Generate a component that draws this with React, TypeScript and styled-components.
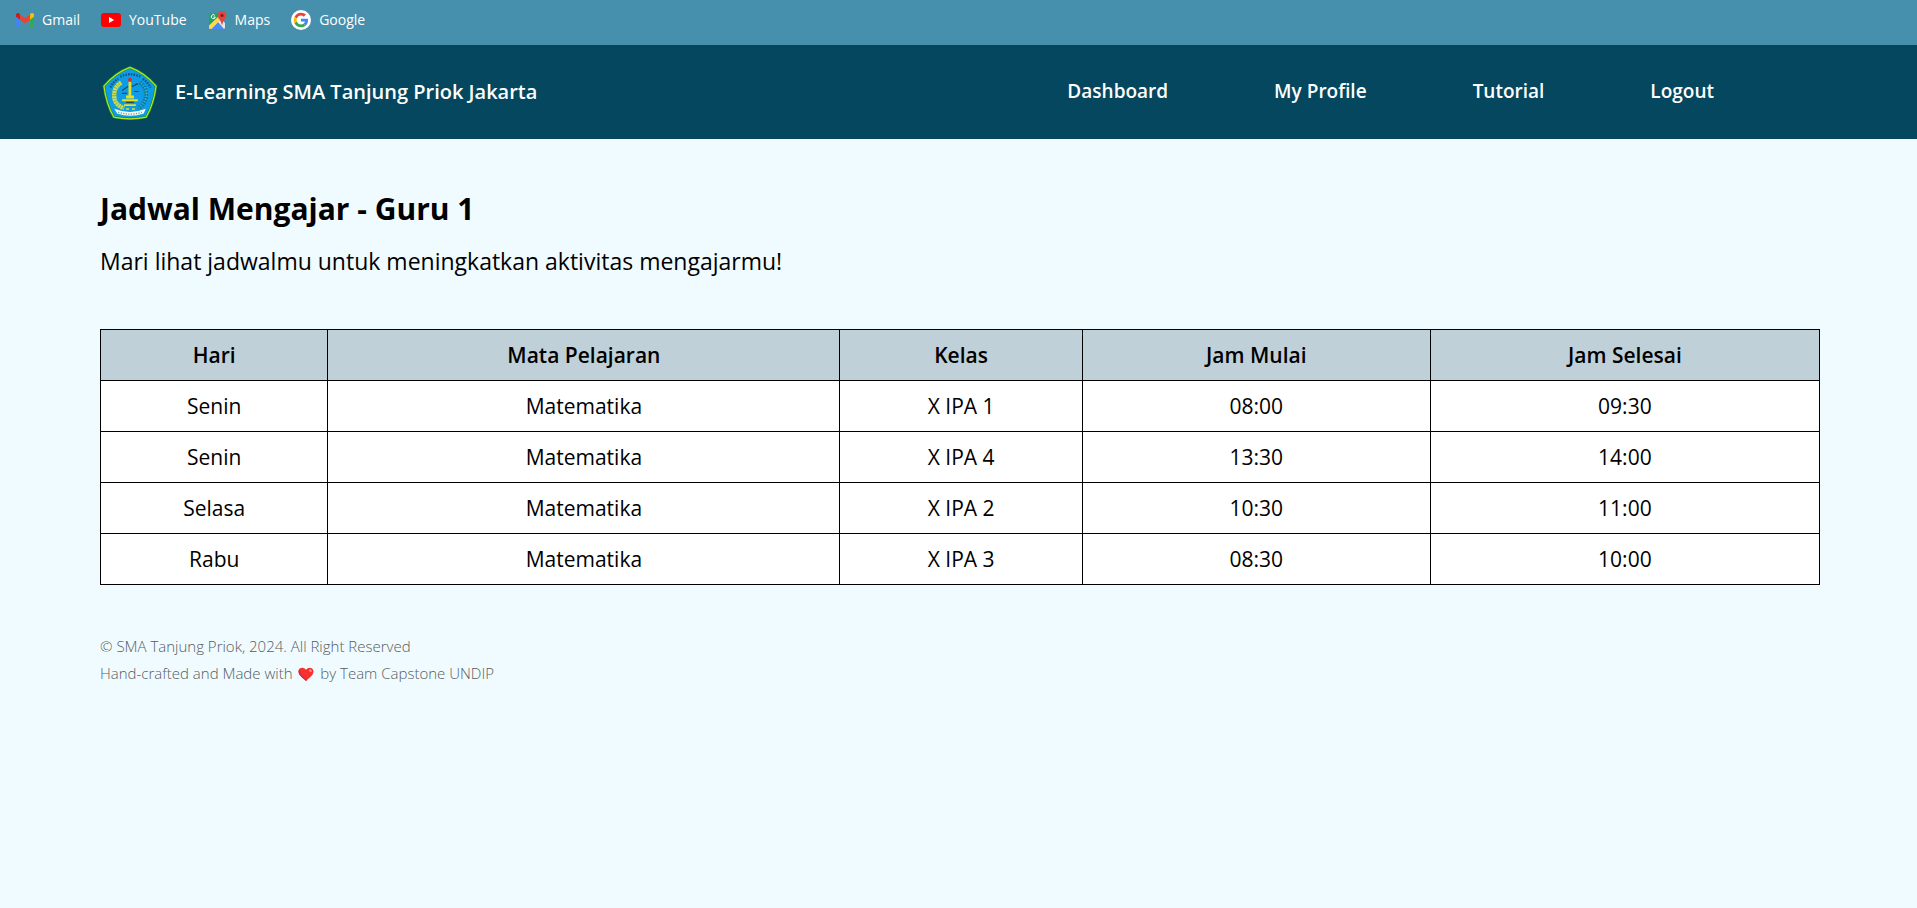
import React from "react";
import styled, { createGlobalStyle } from "styled-components";

const GlobalStyle = createGlobalStyle`
  *, *::before, *::after { box-sizing: border-box; }
  body {
    margin: 0;
    min-height: 100vh;
    background: #f0fbff;
    color: #000;
    font-family: "Open Sans", sans-serif;
  }
`;

const BookmarksBar = styled.nav`
  display: flex;
  align-items: flex-start;
  gap: 21px;
  height: 45px;
  padding: 8px 16px;
  background: #4690ad;
`;

const Bookmark = styled.a`
  display: flex;
  align-items: center;
  gap: 8px;
  height: 24px;
  color: #fff;
  font-size: 14px;
  line-height: 24px;
  text-decoration: none;
  white-space: nowrap;
`;

const Header = styled.header`
  display: flex;
  align-items: center;
  justify-content: space-between;
  height: 94px;
  padding: 0 203px 2px 100px;
  background: #04475e;
`;

const Brand = styled.a`
  display: flex;
  align-items: center;
  gap: 15px;
  color: #fff;
  font-size: 20px;
  font-weight: 550;
  text-decoration: none;
  white-space: nowrap;
`;

const Menu = styled.nav`
  display: flex;
  gap: 106px;
`;

const MenuLink = styled.a`
  color: #fff;
  font-size: 19px;
  line-height: 28px;
  font-weight: 600;
  text-decoration: none;
  white-space: nowrap;
`;

const Main = styled.main`
  padding: 48px 97px 0 100px;
`;

const Title = styled.h1`
  margin: 0;
  font-size: 30px;
  line-height: 44px;
  font-weight: 700;
`;

const Subtitle = styled.p`
  margin: 12px 0 50px;
  font-size: 23px;
  line-height: 36px;
`;

const Schedule = styled.table`
  width: 100%;
  border-collapse: collapse;
  background: #fff;
  font-size: 21px;
  line-height: 30px;
  text-align: center;
`;

const HeadCell = styled.th`
  padding: 10px 5px;
  border: 1px solid #000;
  background: #c0d0d8;
  font-weight: 600;
`;

const Cell = styled.td`
  padding: 10px 5px;
  border: 1px solid #000;
`;

const Footer = styled.footer`
  padding: 48px 100px;
  color: #555b5e;
  font-size: 15px;
  line-height: 27px;
  font-weight: 300;
`;

const FooterLine = styled.p`
  margin: 0;
`;

const HeartSvg = styled.svg`
  margin: 0 1px;
  vertical-align: -3px;
`;

const GmailIcon = () => (
  <svg width="18" height="14" viewBox="0 0 18 14" aria-hidden="true">
    <path d="M0 3v9.500Q0 14 1.400 14H4V5.500z" fill="#4285f4" />
    <path d="M18 3v9.500Q18 14 16.600 14H14V5.500z" fill="#34a853" />
    <path d="M14 1.500V6.700l4-3V2c0-2-2-2.600-3.400-1.500z" fill="#fbbc04" />
    <path d="M4 6.700V1.500l5 3.800 5-3.800v5.200l-5 3.900z" fill="#ea4335" />
    <path d="M0 2v1.700l4 3V1.500L3.400.5C2-.6 0 0 0 2z" fill="#c5221f" />
  </svg>
);

const YouTubeIcon = () => (
  <svg width="20" height="14" viewBox="0 0 20 14" aria-hidden="true">
    <rect width="20" height="14" rx="3" fill="#f00" />
    <path d="M8 4l5.200 3L8 10z" fill="#fff" />
  </svg>
);

const MapsIcon = () => (
  <svg width="19" height="19" viewBox="0 0 19 19" aria-hidden="true">
    <path d="M2 2h11v3L1 16V3q0-1 1-1z" fill="#1fa463" />
    <path d="M1 14.500L12 4l2.500 3L4 18H2q-1 0-1-1z" fill="#ffd84d" />
    <path d="M3.500 18L10 11.500l6.500 6.500z" fill="#4a89f3" />
    <path d="M10 11l3-3 4 4v5l-1 1z" fill="#e3e6e8" />
    <path d="M6.800 4.300a2 2 0 1 0 .5 1.700H5.600" fill="none" stroke="#fff" strokeWidth="1" />
    <path d="M14 0c2.700 0 4.500 2 4.500 4.300 0 3.200-3.600 4.700-4.100 9.200h-.8c-.5-4.500-4.100-6-4.100-9.200C9.500 2 11.300 0 14 0z" fill="#e0483e" />
    <circle cx="14" cy="4.400" r="1.600" fill="#80231c" />
  </svg>
);

const GoogleIcon = () => (
  <svg width="20" height="20" viewBox="0 0 48 48" aria-hidden="true">
    <circle cx="24" cy="24" r="24" fill="#fff" />
    <g transform="translate(6.500 6.500) scale(.73)">
      <path fill="#ea4335" d="M24 9.500c3.540 0 6.710 1.220 9.210 3.600l6.850-6.850C35.900 2.380 30.470 0 24 0 14.620 0 6.510 5.380 2.560 13.220l7.980 6.190C12.430 13.720 17.740 9.500 24 9.500z" />
      <path fill="#4285f4" d="M46.980 24.550c0-1.570-.15-3.090-.38-4.550H24v9.020h12.940c-.58 2.960-2.260 5.480-4.780 7.180l7.730 6c4.510-4.180 7.090-10.360 7.090-17.650z" />
      <path fill="#fbbc05" d="M10.530 28.590c-.48-1.450-.76-2.990-.76-4.590s.27-3.140.76-4.590l-7.980-6.190C.92 16.460 0 20.120 0 24c0 3.880.92 7.540 2.560 10.780l7.970-6.190z" />
      <path fill="#34a853" d="M24 48c6.480 0 11.930-2.130 15.890-5.810l-7.730-6c-2.150 1.450-4.920 2.300-8.160 2.300-6.260 0-11.570-4.220-13.470-9.910l-7.980 6.190C6.510 42.620 14.620 48 24 48z" />
    </g>
  </svg>
);

const SchoolCrest = () => (
  <svg width="60" height="60" viewBox="-0.5 -2 61 61" aria-hidden="true">
    <path d="M30 4.500Q45 10 56.500 23.500Q54 42 46.500 55Q30 58.500 13.500 55Q6 42 3.500 23.500Q15 10 30 4.500z" fill="#0d9ce5" stroke="#168a3c" strokeWidth="2.600" strokeLinejoin="round" />
    <path d="M30 4.500Q45 10 56.500 23.500Q54 42 46.500 55Q30 58.500 13.500 55Q6 42 3.500 23.500Q15 10 30 4.500z" fill="none" stroke="#b5e61d" strokeWidth="1.200" strokeLinejoin="round" />
    <path d="M10 25Q13 19 18 16M20 14Q30 9 41 14M43 16Q48 20 51 25" fill="none" stroke="#155575" strokeWidth="2.400" strokeDasharray="1.600 1.200" />
    <path d="M21 20Q13 25 14 35Q15 43 24 46" fill="none" stroke="#cfdc48" strokeWidth="4.500" strokeDasharray="2.200 .5" />
    <path d="M40 20Q48 26 46 36Q44 43 38 46" fill="none" stroke="#147683" strokeWidth="4.500" strokeDasharray="1.300 1.500" />
    <path d="M41 20Q49 27 46 36Q44 42 38 45" fill="none" stroke="#74c8c3" strokeWidth="1" strokeDasharray="1 2" />
    <path d="M28.500 19h2.800v14h-2.800zM26 33h8v3h-8zM22 37h16v1.800H22zM24 42h12v1.800H24zM26 46h3v1.500h-3zM32 46h3v1.500h-3z" fill="#e9df25" />
    <path d="M22 28l6-4M32 24l6-3M22 31h5M34 29h5M26 40h8" fill="none" stroke="#174a62" strokeWidth="1.200" />
    <circle cx="30" cy="17" r="2" fill="#da2932" />
    <path d="M14 46.500Q30 53 46 46.500L44 51.500Q30 56 17 51.500z" fill="#f3fbef" />
    <path d="M18 50Q30 54 42 50" fill="none" stroke="#5f9a8c" strokeWidth="1.300" strokeDasharray="1.200 1.400" />
  </svg>
);

const Heart = () => (
  <HeartSvg width="18" height="16" viewBox="0 0 18 16" role="img" aria-label="love">
    <path d="M9 15C6 12.300 1.500 9.300 1.500 5.600 1.500 1.300 6.700.4 9 3.800 11.300.4 16.500 1.300 16.500 5.600 16.500 9.300 12 12.300 9 15z" fill="#f8312f" />
    <path d="M9 15C6 12.300 1.500 9.300 1.500 5.600q0-2 1.500-3.100C2.600 8 6 11 10.300 13.800z" fill="#d3264f" />
    <ellipse cx="13.400" cy="4.600" rx="1.600" ry="1.100" fill="#ff8b87" transform="rotate(45 13.400 4.600)" />
  </HeartSvg>
);

const bookmarks = [
  { label: "Gmail", Icon: GmailIcon },
  { label: "YouTube", Icon: YouTubeIcon },
  { label: "Maps", Icon: MapsIcon },
  { label: "Google", Icon: GoogleIcon },
];

const menuItems = ["Dashboard", "My Profile", "Tutorial", "Logout"];

const columns = ["Hari", "Mata Pelajaran", "Kelas", "Jam Mulai", "Jam Selesai"];

const lessons = [
  ["Senin", "Matematika", "X IPA 1", "08:00", "09:30"],
  ["Senin", "Matematika", "X IPA 4", "13:30", "14:00"],
  ["Selasa", "Matematika", "X IPA 2", "10:30", "11:00"],
  ["Rabu", "Matematika", "X IPA 3", "08:30", "10:00"],
];

export default function App() {
  return (
    <>
      <GlobalStyle />
      <BookmarksBar aria-label="Bookmarks">
        {bookmarks.map(({ label, Icon }) => (
          <Bookmark key={label} href="#">
            <Icon />
            {label}
          </Bookmark>
        ))}
      </BookmarksBar>
      <Header>
        <Brand href="#">
          <SchoolCrest />
          E-Learning SMA Tanjung Priok Jakarta
        </Brand>
        <Menu aria-label="Main">
          {menuItems.map((item) => (
            <MenuLink key={item} href="#">{item}</MenuLink>
          ))}
        </Menu>
      </Header>
      <Main>
        <Title>Jadwal Mengajar - Guru 1</Title>
        <Subtitle>Mari lihat jadwalmu untuk meningkatkan aktivitas mengajarmu!</Subtitle>
        <Schedule>
          <thead>
            <tr>
              {columns.map((column) => (
                <HeadCell key={column} scope="col">{column}</HeadCell>
              ))}
            </tr>
          </thead>
          <tbody>
            {lessons.map((lesson, row) => (
              <tr key={row}>
                {lesson.map((value, column) => (
                  <Cell key={column}>{value}</Cell>
                ))}
              </tr>
            ))}
          </tbody>
        </Schedule>
      </Main>
      <Footer>
        <FooterLine>© SMA Tanjung Priok, 2024. All Right Reserved</FooterLine>
        <FooterLine>
          Hand-crafted and Made with <Heart /> by Team Capstone UNDIP
        </FooterLine>
      </Footer>
    </>
  );
}
